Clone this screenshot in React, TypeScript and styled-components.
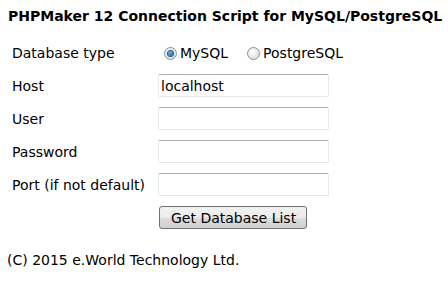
import React, { useState } from 'react';
import styled, { createGlobalStyle } from 'styled-components';

const GlobalStyle = createGlobalStyle`
    body {
        margin: 0;
        background: #ffffff;
        font-family: "DejaVu Sans", Verdana, sans-serif;
        font-size: 14px;
        color: #000000;
    }
`;

const Page = styled.div`
    padding: 6px 0 0 8px;
`;

const Titulo = styled.h1`
    font-size: 14px;
    font-weight: bold;
    margin: 0 0 11px 0;
    line-height: 20px;
`;

const Formulario = styled.form`
    display: grid;
    grid-template-columns: 146px 172px;
    grid-template-rows: 32px;
    grid-auto-rows: 33px;
    padding-left: 4px;
    align-items: center;
`;

const Rotulo = styled.label`
    color: #000000;
`;

const GrupoRadio = styled.div`
    display: flex;
    align-items: center;
    padding-left: 6px;
`;

const OpcaoRadio = styled.label`
    display: flex;
    align-items: center;
    gap: 3px;
    margin-right: 19px;
`;

const Bolinha = styled.span<{ marcado: boolean }>`
    width: 11px;
    height: 11px;
    border-radius: 50%;
    border: 1px solid #8e8f8f;
    background: radial-gradient(circle at 40% 35%, #ffffff, #d4d4d4);
    display: inline-flex;
    align-items: center;
    justify-content: center;

    &::after {
        content: '';
        display: ${({ marcado }) => (marcado ? 'block' : 'none')};
        width: 5px;
        height: 5px;
        border-radius: 50%;
        background: radial-gradient(circle at 40% 35%, #5fb4ef, #0b4e8d);
        box-shadow: 0 0 0 1px #245b8a;
    }
`;

const Campo = styled.input`
    box-sizing: border-box;
    width: 171px;
    height: 23px;
    border: 1px solid #e3e9ef;
    border-top-color: #abadb3;
    border-radius: 2px;
    padding: 1px 2px;
    font-family: "DejaVu Sans", Verdana, sans-serif;
    font-size: 14px;
    color: #000000;
    outline: none;
`;

const Botao = styled.button`
    box-sizing: border-box;
    margin-left: 1px;
    height: 23px;
    padding: 0 10px 0 11px;
    border: 1px solid #707070;
    border-radius: 3px;
    background: linear-gradient(#f2f2f2 0%, #ebebeb 50%, #dddddd 51%, #cfcfcf 100%);
    font-family: "DejaVu Sans", Verdana, sans-serif;
    font-size: 14px;
    color: #000000;
    justify-self: start;
`;

const Rodape = styled.p`
    margin: 18px 0 0 -1px;
`;

const campos = [
    { rotulo: 'Host', valor: 'localhost' },
    { rotulo: 'User', valor: '' },
    { rotulo: 'Password', valor: '' },
    { rotulo: 'Port (if not default)', valor: '' }
];

const App: React.FC = () => {
    const [tipo, setTipo] = useState('mysql');

    return (
        <Page>
            <GlobalStyle />
            <Titulo>PHPMaker 12 Connection Script for MySQL/PostgreSQL</Titulo>
            <Formulario onSubmit={(e) => e.preventDefault()}>
                <Rotulo>Database type</Rotulo>
                <GrupoRadio>
                    <OpcaoRadio onClick={() => setTipo('mysql')}>
                        <Bolinha marcado={tipo === 'mysql'} />MySQL
                    </OpcaoRadio>
                    <OpcaoRadio onClick={() => setTipo('pgsql')}>
                        <Bolinha marcado={tipo === 'pgsql'} />PostgreSQL
                    </OpcaoRadio>
                </GrupoRadio>
                {campos.map((campo) => (
                    <React.Fragment key={campo.rotulo}>
                        <Rotulo>{campo.rotulo}</Rotulo>
                        <Campo defaultValue={campo.valor} />
                    </React.Fragment>
                ))}
                <span />
                <Botao type="submit">Get Database List</Botao>
            </Formulario>
            <Rodape>(C) 2015 e.World Technology Ltd.</Rodape>
        </Page>
    );
};

export default App;
